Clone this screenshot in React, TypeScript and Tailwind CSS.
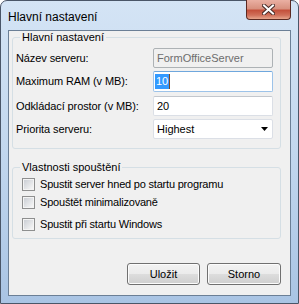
function CheckBox({ label, className = "" }: { label: string; className?: string }) {
  return (
    <div className={"flex h-[18px] items-center gap-[5px] pl-[9px] " + className}>
      <div className="flex h-[13px] w-[13px] items-center justify-center border border-[#8e8f8f] bg-[#f4f4f4]">
        <div className="h-[9px] w-[9px] bg-gradient-to-br from-[#cbcfd5] to-[#f7f7f7]" />
      </div>
      <span className="tracking-[-0.2px]">{label}</span>
    </div>
  );
}

function Row({ label, children, className = "" }: { label: string; children: React.ReactNode; className?: string }) {
  return (
    <div className={"flex items-center pl-[3px] " + className}>
      <div className="w-[137px] tracking-[-0.1px]">{label}</div>
      {children}
    </div>
  );
}

export default function App() {
  const btn =
    "flex h-[22px] items-center justify-center rounded-[3px] border border-[#707070] bg-[linear-gradient(to_bottom,#f2f2f2_0%,#ebebeb_50%,#dddddd_50%,#cfcfcf_100%)] shadow-[inset_0_0_0_1px_#fcfcfc]";
  return (
    <div className="h-[304px] w-[299px] overflow-hidden bg-white font-['Liberation_Sans',Arial,sans-serif] text-[11px] text-black">
      <div className="flex h-full flex-col rounded-t-[7px] border border-[#4a5668] bg-gradient-to-b from-[#d4e4f5] via-[#c2d7ee] to-[#a9c4e4] px-[7px] pb-[7px]">
        {/* title bar */}
        <div className="flex h-[29px] items-start justify-between">
          <div className="pt-[9px] text-[12px] leading-[14px]">Hlavní nastavení</div>
          <div className="-mt-px flex h-[20px] w-[45px] items-center justify-center rounded-b-[4px] border border-t-0 border-[#5b2a22] bg-[linear-gradient(to_bottom,#eab0a3_0%,#d8917f_45%,#c4513c_55%,#d0705a_80%,#e7a58c_100%)]">
            <svg width="13" height="11" viewBox="0 0 13 11">
              <path d="M2 1.5 L11 9.5 M11 1.5 L2 9.5" stroke="#4a2c28" strokeWidth="4" strokeLinecap="square" />
              <path d="M2 1.5 L11 9.5 M11 1.5 L2 9.5" stroke="#ffffff" strokeWidth="2" strokeLinecap="square" />
            </svg>
          </div>
        </div>

        {/* client */}
        <div className="flex-1 border border-[#6b7f96] bg-[#f0f0f0]">
          <fieldset className="ml-[3px] w-[269px] rounded-[3px] border border-[#d5dfe5] pt-[4px] pb-[9px]">
            <legend className="ml-[7px] px-[2px] leading-[13px]">Hlavní nastavení</legend>
            <Row label="Název serveru:" className="h-[20px]">
              <div className="flex h-[20px] w-[120px] items-center rounded-[2px] border border-[#adb2b5] bg-[#f0f0f0] pl-[3px] text-[#6d6d6d]">
                FormOfficeServer
              </div>
            </Row>
            <Row label="Maximum RAM (v MB):" className="mt-[3px] h-[21px]">
              <div className="flex h-[21px] w-[120px] items-center rounded-[2px] border border-[#9dc3e9] border-t-[#6fa7dd] bg-white pl-[1px]">
                <span className="bg-[#3399ff] px-[1px] leading-[15px] text-white">10</span>
                <span className="h-[15px] w-px bg-[#7a4a2a]" />
              </div>
            </Row>
            <Row label="Odkládací prostor (v MB):" className="mt-[4px] h-[20px]">
              <div className="flex h-[20px] w-[120px] items-center rounded-[2px] border border-[#dbdfe6] border-t-[#c3c7cd] bg-white pl-[3px]">
                20
              </div>
            </Row>
            <Row label="Priorita serveru:" className="mt-[3px] h-[20px]">
              <div className="flex h-[20px] w-[120px] items-center justify-between rounded-[2px] border border-[#dbdfe6] bg-white pr-[4px] pl-[3px]">
                <span>Highest</span>
                <svg width="7" height="4" viewBox="0 0 7 4">
                  <path d="M0 0 H7 L3.5 4 Z" fill="#000" />
                </svg>
              </div>
            </Row>
          </fieldset>

          <fieldset className="mt-[12px] ml-[3px] w-[269px] rounded-[3px] border border-[#d5dfe5] pt-px pb-[5px]">
            <legend className="ml-[7px] px-[2px] leading-[13px]">Vlastnosti spouštění</legend>
            <CheckBox label="Spustit server hned po startu programu" />
            <CheckBox label="Spouštět minimalizovaně" />
            <CheckBox label="Spustit při startu Windows" className="mt-[4px]" />
          </fieldset>

          <div className="mt-[24px] ml-[3px] flex w-[269px] justify-end gap-[7px]">
            <div className={btn + " w-[73px]"}>Uložit</div>
            <div className={btn + " w-[74px]"}>Storno</div>
          </div>
        </div>
      </div>
    </div>
  );
}
